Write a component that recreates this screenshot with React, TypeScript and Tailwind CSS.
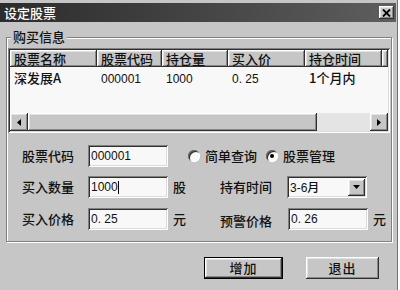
import React from 'react';

const RAISED =
  'shadow-[inset_-1px_-1px_#303030,inset_1px_1px_#ffffff,inset_-2px_-2px_#888888,inset_2px_2px_#e2e2e2]';
const SUNKEN =
  'shadow-[inset_1px_1px_#808080,inset_-1px_-1px_#ffffff,inset_2px_2px_#303030,inset_-2px_-2px_#dcdcdc]';

const CJK = "font-['Noto_Sans_CJK_SC',sans-serif] font-medium";
const NUM = "font-['Liberation_Sans','Noto_Sans_CJK_SC',sans-serif]";

const COLUMNS = [
  { title: '股票名称', width: 'w-[87px]', value: '深发展A', num: false },
  { title: '股票代码', width: 'w-[65px]', value: '000001', num: true },
  { title: '持仓量', width: 'w-[66px]', value: '1000', num: true },
  { title: '买入价', width: 'w-[77px]', value: '0. 25', num: true },
  { title: '持仓时间', width: 'w-[77px]', value: '1个月内', num: false },
];

function Field({ value, cursor }: { value: string; cursor?: boolean }) {
  return (
    <div className={`w-[80px] h-[22px] bg-[#f8f8f8] ${SUNKEN} flex items-center pl-[3px]`}>
      <span className={`${NUM} text-[12px] text-[#111] leading-none`}>{value}</span>
      {cursor && <span className="w-px h-[13px] bg-black" />}
    </div>
  );
}

function Radio({ checked, label }: { checked?: boolean; label: string }) {
  return (
    <div className="flex items-center gap-[5px]">
      <div className="w-[12px] h-[12px] rounded-full bg-[#f8f8f8] shadow-[inset_1px_1px_#707070,inset_-1px_-1px_#ffffff,inset_2px_2px_#303030] flex items-center justify-center">
        {checked && <div className="w-[4px] h-[4px] rounded-full bg-black" />}
      </div>
      <span className={`${CJK} text-[13px] text-[#111]`}>{label}</span>
    </div>
  );
}

function Button({ label, def, width }: { label: string; def?: boolean; width: string }) {
  return (
    <div className={`${width} h-[22px] ${def ? 'border border-black' : ''}`}>
      <div className={`w-full h-full ${RAISED} flex items-center justify-center`}>
        <span className={`${CJK} text-[13px] text-[#111] tracking-[1px]`}>{label}</span>
      </div>
    </div>
  );
}

export default function App() {
  return (
    <div className="w-[400px] h-[290px] bg-[#c6c6c6] overflow-hidden flex flex-col pt-[3px] pr-[4px] shadow-[inset_-2px_0_#ffffff,inset_-3px_0_#707070]">
      {/* title bar */}
      <div className="h-[19px] shrink-0 bg-gradient-to-r from-[#2c2c2c] to-[#5e5e5e] flex items-center justify-between pl-[4px] pr-[2px]">
        <span className={`${CJK} text-[13px] text-white leading-none`}>设定股票</span>
        <div className={`w-[15px] h-[13px] bg-[#c6c6c6] ${RAISED} flex items-center justify-center`}>
          <svg width="9" height="8" viewBox="0 0 9 8">
            <path d="M1 0.5 L8 7.5 M8 0.5 L1 7.5" stroke="#000" strokeWidth="1.8" />
          </svg>
        </div>
      </div>

      {/* group box */}
      <div className="relative ml-[6px] mt-[15px] w-[386px] h-[205px] border border-[#808080] shadow-[inset_1px_1px_#ffffff,1px_1px_#ffffff] pt-[10px] pl-[1px]">
        <span className={`absolute left-[4px] -top-[10px] px-[2px] bg-[#c6c6c6] ${CJK} text-[13px] text-[#111] leading-[18px]`}>
          购买信息
        </span>

        {/* list view */}
        <div className={`w-[382px] h-[85px] bg-[#f8f8f8] ${SUNKEN} p-[2px] flex flex-col`}>
          <div className="flex h-[17px] shrink-0 bg-[#c6c6c6]">
            {COLUMNS.map((c) => (
              <div
                key={c.title}
                className={`${c.width} shrink-0 h-full ${RAISED} flex items-center pl-[4px]`}
              >
                <span className={`${CJK} text-[13px] text-[#111] leading-none`}>{c.title}</span>
              </div>
            ))}
            <div className={`flex-1 h-full ${RAISED}`} />
          </div>
          <div className="flex h-[17px] items-center mt-[1px]">
            {COLUMNS.map((c) => (
              <div key={c.title} className={`${c.width} shrink-0 pl-[4px]`}>
                <span className={`${c.num ? NUM + ' text-[12px]' : CJK + ' text-[13px]'} text-[#111] leading-none`}>
                  {c.value}
                </span>
              </div>
            ))}
          </div>
          <div className="flex-1" />
          {/* horizontal scrollbar */}
          <div className="h-[18px] shrink-0 flex bg-[#e4e4e4]">
            <div className={`w-[18px] h-full bg-[#c6c6c6] ${RAISED} flex items-center justify-center`}>
              <svg width="4" height="7" viewBox="0 0 4 7">
                <path d="M4 0 L0 3.5 L4 7 Z" fill="#000" />
              </svg>
            </div>
            <div className={`w-[289px] h-full bg-[#c6c6c6] ${RAISED}`} />
            <div className="flex-1" />
            <div className={`w-[18px] h-full bg-[#c6c6c6] ${RAISED} flex items-center justify-center`}>
              <svg width="4" height="7" viewBox="0 0 4 7">
                <path d="M0 0 L4 3.5 L0 7 Z" fill="#000" />
              </svg>
            </div>
          </div>
        </div>

        {/* form */}
        <div className="flex flex-col gap-[9px] mt-[12px] pl-[14px]">
          <div className="flex items-center h-[22px]">
            <span className={`${CJK} text-[13px] text-[#111] w-[66px]`}>股票代码</span>
            <Field value="000001" />
            <div className="ml-[20px] flex items-center gap-[9px]">
              <Radio label="简单查询" />
              <Radio checked label="股票管理" />
            </div>
          </div>
          <div className="flex items-center h-[22px]">
            <span className={`${CJK} text-[13px] text-[#111] w-[66px]`}>买入数量</span>
            <Field value="1000" cursor />
            <span className={`${CJK} text-[13px] text-[#111] ml-[5px] w-[47px]`}>股</span>
            <span className={`${CJK} text-[13px] text-[#111] w-[67px]`}>持有时间</span>
            <div className={`w-[80px] h-[22px] bg-[#f8f8f8] ${SUNKEN} flex items-center pl-[3px] pr-[2px]`}>
              <span className={`${NUM} text-[12px] text-[#111] leading-none flex-1`}>
                3-6<span className={CJK}>月</span>
              </span>
              <div className={`w-[17px] h-[17px] bg-[#c6c6c6] ${RAISED} flex items-center justify-center`}>
                <svg width="7" height="4" viewBox="0 0 7 4">
                  <path d="M0 0 L7 0 L3.5 4 Z" fill="#000" />
                </svg>
              </div>
            </div>
          </div>
          <div className="flex items-center h-[22px] mt-[1px]">
            <span className={`${CJK} text-[13px] text-[#111] w-[66px]`}>买入价格</span>
            <Field value="0. 25" />
            <span className={`${CJK} text-[13px] text-[#111] ml-[5px] w-[47px]`}>元</span>
            <span className={`${CJK} text-[13px] text-[#111] w-[68px] mt-[4px]`}>预警价格</span>
            <Field value="0. 26" />
            <span className={`${CJK} text-[13px] text-[#111] ml-[5px]`}>元</span>
          </div>
        </div>
      </div>

      {/* buttons */}
      <div className="flex mt-[15px] pl-[204px] gap-[23px]">
        <Button label="增加" def width="w-[79px]" />
        <Button label="退出" width="w-[73px]" />
      </div>
    </div>
  );
}
